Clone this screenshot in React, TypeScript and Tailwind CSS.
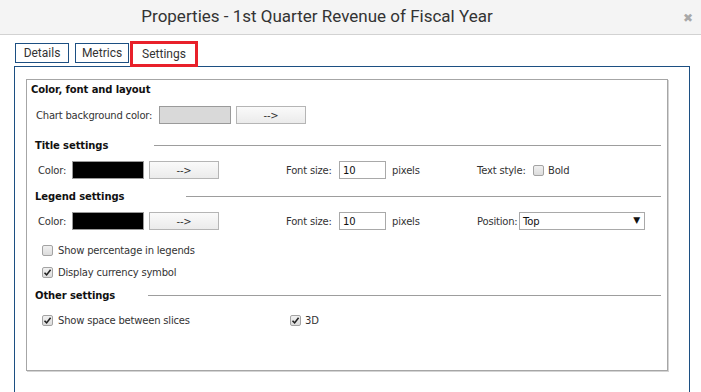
import React from 'react'

const ui = { fontFamily: '"DejaVu Sans", Verdana, sans-serif' }
const rob = { fontFamily: 'Roboto, "Liberation Sans", sans-serif' }

function Check({ checked }: { checked?: boolean }) {
  return (
    <span className="relative inline-flex h-[11px] w-[11px] shrink-0 items-center justify-center rounded-[2px] border border-[#a3a3a3] bg-gradient-to-b from-[#f0f0f0] to-[#dcdcdc]">
      {checked && (
        <svg width="9" height="9" viewBox="0 0 9 9" className="absolute">
          <path d="M1.5 4.8 L3.6 6.9 L7.6 1.8" fill="none" stroke="#222" strokeWidth="1.6" />
        </svg>
      )}
    </span>
  )
}

function Swatch({ color }: { color: string }) {
  return <span className={`h-[18px] w-[72px] shrink-0 border border-[#9a9a9a] ${color}`} />
}

function ArrowBtn() {
  return (
    <span className="ml-[5px] flex h-[18px] w-[70px] shrink-0 items-center justify-center border border-[#b5b5b5] bg-gradient-to-b from-[#fafafa] to-[#ebebeb] text-[10px] text-[#333]">
      --&gt;
    </span>
  )
}

function Section({ title, width }: { title: string; width: string }) {
  return (
    <div className="flex h-[18px] items-center pl-[8px] pr-[6px]">
      <span className={`shrink-0 text-[10px] font-bold tracking-[-0.1px] text-[#111] ${width}`}>{title}</span>
      <span className="h-px flex-1 bg-[#9d9d9d]" />
    </div>
  )
}

function SizeInput() {
  return (
    <>
      <span className="ml-[67px] w-[53px] shrink-0">Font size:</span>
      <span className="flex h-[18px] w-[47px] shrink-0 items-center border border-[#a9a9a9] pl-[3px] text-[#111]">10</span>
      <span className="ml-[6px] w-[85px] shrink-0">pixels</span>
    </>
  )
}

export default function App() {
  return (
    <div className="h-[392px] w-[701px] overflow-hidden bg-white" style={rob}>
      {/* Title bar */}
      <div className="relative flex h-[35px] items-center justify-center border-b border-[#d2d2d2] bg-[#f4f4f4] pr-[67px]">
        <span className="text-[17px] text-[#333]">Properties - 1st Quarter Revenue of Fiscal Year</span>
        <span className="absolute right-[8px] top-[9px] text-[12px] text-[#a8a8a8]">✖</span>
      </div>

      {/* Tabs */}
      <div className="flex h-[31px] items-start gap-[6px] pl-[15px] pt-[8px] text-[12px] text-[#333]">
        <span className="flex h-[20px] w-[54px] items-center justify-center border border-[#1c4f82]">Details</span>
        <span className="flex h-[20px] w-[54px] items-center justify-center border border-[#1c4f82]">Metrics</span>
        <span className="relative z-10 -mt-[2px] -ml-[5px] flex h-[26px] w-[68px] items-center justify-center border-[3px] border-[#e8202a] bg-white pb-[1px]">
          Settings
        </span>
      </div>

      {/* Panel */}
      <div className="ml-[14px] h-[330px] w-[676px] border border-b-0 border-[#1c4f82] pl-[11px] pt-[12px]" style={ui}>
        <div className="h-[292px] w-[642px] border border-[#a6a6a6] text-[10px] tracking-[-0.2px] text-[#333] shadow-[1px_1px_0_#d4d4d4]">
          <div className="flex h-[18px] items-center pl-[4px] pt-[1px] font-bold tracking-[-0.1px] text-[#111]">Color, font and layout</div>

          <div className="mt-[8px] flex h-[18px] items-center pl-[9px]">
            <span className="w-[123px] shrink-0">Chart background color:</span>
            <Swatch color="bg-[#d9d9d9]" />
            <ArrowBtn />
          </div>

          <div className="mt-[12px]">
            <Section title="Title settings" width="w-[119px]" />
          </div>
          <div className="mt-[7px] flex h-[18px] items-center pl-[11px]">
            <span className="w-[34px] shrink-0">Color:</span>
            <Swatch color="bg-black" />
            <ArrowBtn />
            <SizeInput />
            <span className="w-[56px] shrink-0">Text style:</span>
            <Check />
            <span className="ml-[4px]">Bold</span>
          </div>

          <div className="mt-[8px]">
            <Section title="Legend settings" width="w-[151px]" />
          </div>
          <div className="mt-[7px] flex h-[18px] items-center pl-[11px]">
            <span className="w-[34px] shrink-0">Color:</span>
            <Swatch color="bg-black" />
            <ArrowBtn />
            <SizeInput />
            <span className="w-[42px] shrink-0">Position:</span>
            <span className="flex h-[18px] w-[126px] shrink-0 items-center justify-between border border-[#a9a9a9] pl-[3px] pr-[4px] text-[#111]">
              Top
              <span className="text-[9px]">▼</span>
            </span>
          </div>

          <div className="mt-[11px] flex h-[18px] items-center pl-[15px]">
            <Check />
            <span className="ml-[5px]">Show percentage in legends</span>
          </div>
          <div className="mt-[4px] flex h-[18px] items-center pl-[15px]">
            <Check checked />
            <span className="ml-[5px]">Display currency symbol</span>
          </div>

          <div className="mt-[5px]">
            <Section title="Other settings" width="w-[113px]" />
          </div>
          <div className="mt-[7px] flex h-[18px] items-center pl-[15px]">
            <Check checked />
            <span className="ml-[5px] w-[232px] shrink-0">Show space between slices</span>
            <Check checked />
            <span className="ml-[4px]">3D</span>
          </div>
        </div>
      </div>
    </div>
  )
}
